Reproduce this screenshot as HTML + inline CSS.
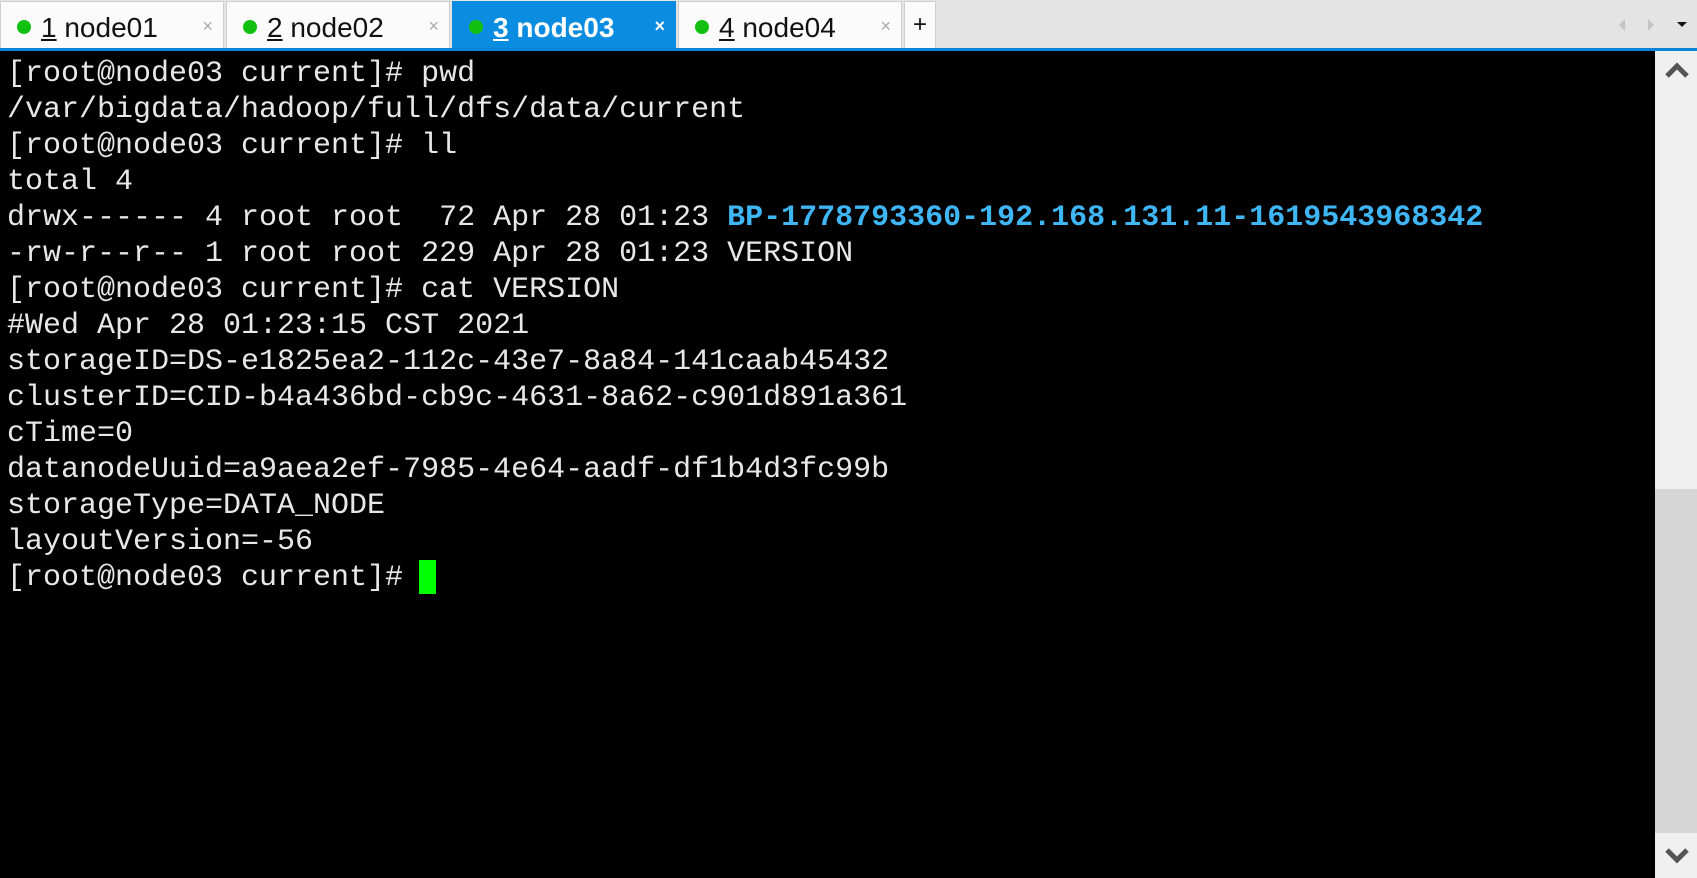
<!DOCTYPE html>
<html><head><meta charset="utf-8"><style>
*{margin:0;padding:0;box-sizing:border-box}
body{width:1697px;height:878px;overflow:hidden;background:#000;position:relative;font-family:"Liberation Sans",sans-serif}
#bar{position:absolute;left:0;top:0;width:1697px;height:49px;background:#e4e4e4}
#line{position:absolute;left:0;top:48px;width:1697px;height:3px;background:#0a84d6}
.tab{position:absolute;top:1px;height:47px;background:#fbfbfb;border:1px solid #cfcfcf;border-bottom:none;font-size:28px;color:#111;line-height:52px}
.tab .dot{position:absolute;left:16px;top:18px;width:14px;height:14px;border-radius:50%;background:#12c012}
.tab .t{position:absolute;left:40px;top:0}
.tab .x{position:absolute;right:10px;top:0;font-size:18px;color:#aaa;line-height:48px}
.tab.a{background:#0a8ce0;border-color:#0a8ce0;color:#fff;font-weight:bold}
.tab.a .x{color:#fff}
u{text-decoration:underline}
#term{position:absolute;left:7px;top:56px;font-family:"Liberation Mono",monospace;font-size:30px;line-height:36px;color:#e8e8e8;white-space:pre}
.b{color:#3fb6f5;font-weight:bold}
#cur{position:absolute;left:419px;top:560px;width:17px;height:34px;background:#00ff00}
#sb{position:absolute;left:1655px;top:51px;width:42px;height:827px;background:#f0f0f0}
#thumb{position:absolute;left:1655px;top:489px;width:42px;height:344px;background:#d6d6d6}
</style></head><body>
<div id="bar"></div>
<div class="tab" style="left:0;width:224px"><div class="dot"></div><div class="t"><u>1</u> node01</div><div class="x">×</div></div>
<div class="tab" style="left:226px;width:224px"><div class="dot"></div><div class="t"><u>2</u> node02</div><div class="x">×</div></div>
<div class="tab a" style="left:452px;width:224px"><div class="dot"></div><div class="t"><u>3</u> node03</div><div class="x">×</div></div>
<div class="tab" style="left:678px;width:224px"><div class="dot"></div><div class="t"><u>4</u> node04</div><div class="x">×</div></div>
<div class="tab" style="left:904px;width:32px;text-align:center;font-size:24px;line-height:46px">+</div>
<svg style="position:absolute;left:1615px;top:15px" width="82" height="20"><path d="M10 4 L4 10 L10 16Z" fill="#c4c4c4"/><path d="M33 4 L39 10 L33 16Z" fill="#c4c4c4"/><path d="M62 7 L72 7 L67 12Z" fill="#111"/></svg>
<div id="line"></div>
<div id="term">[root@node03 current]# pwd
/var/bigdata/hadoop/full/dfs/data/current
[root@node03 current]# ll
total 4
drwx------ 4 root root  72 Apr 28 01:23 <span class="b">BP-1778793360-192.168.131.11-1619543968342</span>
-rw-r--r-- 1 root root 229 Apr 28 01:23 VERSION
[root@node03 current]# cat VERSION
#Wed Apr 28 01:23:15 CST 2021
storageID=DS-e1825ea2-112c-43e7-8a84-141caab45432
clusterID=CID-b4a436bd-cb9c-4631-8a62-c901d891a361
cTime=0
datanodeUuid=a9aea2ef-7985-4e64-aadf-df1b4d3fc99b
storageType=DATA_NODE
layoutVersion=-56
[root@node03 current]# </div>
<div id="cur"></div>
<div id="sb"></div>
<div id="thumb"></div>
<svg style="position:absolute;left:1664px;top:60px" width="26" height="20"><path d="M3 16 L13 6 L23 16" stroke="#555" stroke-width="5" fill="none"/></svg>
<svg style="position:absolute;left:1664px;top:846px" width="26" height="20"><path d="M3 4 L13 14 L23 4" stroke="#555" stroke-width="5" fill="none"/></svg>
</body></html>
